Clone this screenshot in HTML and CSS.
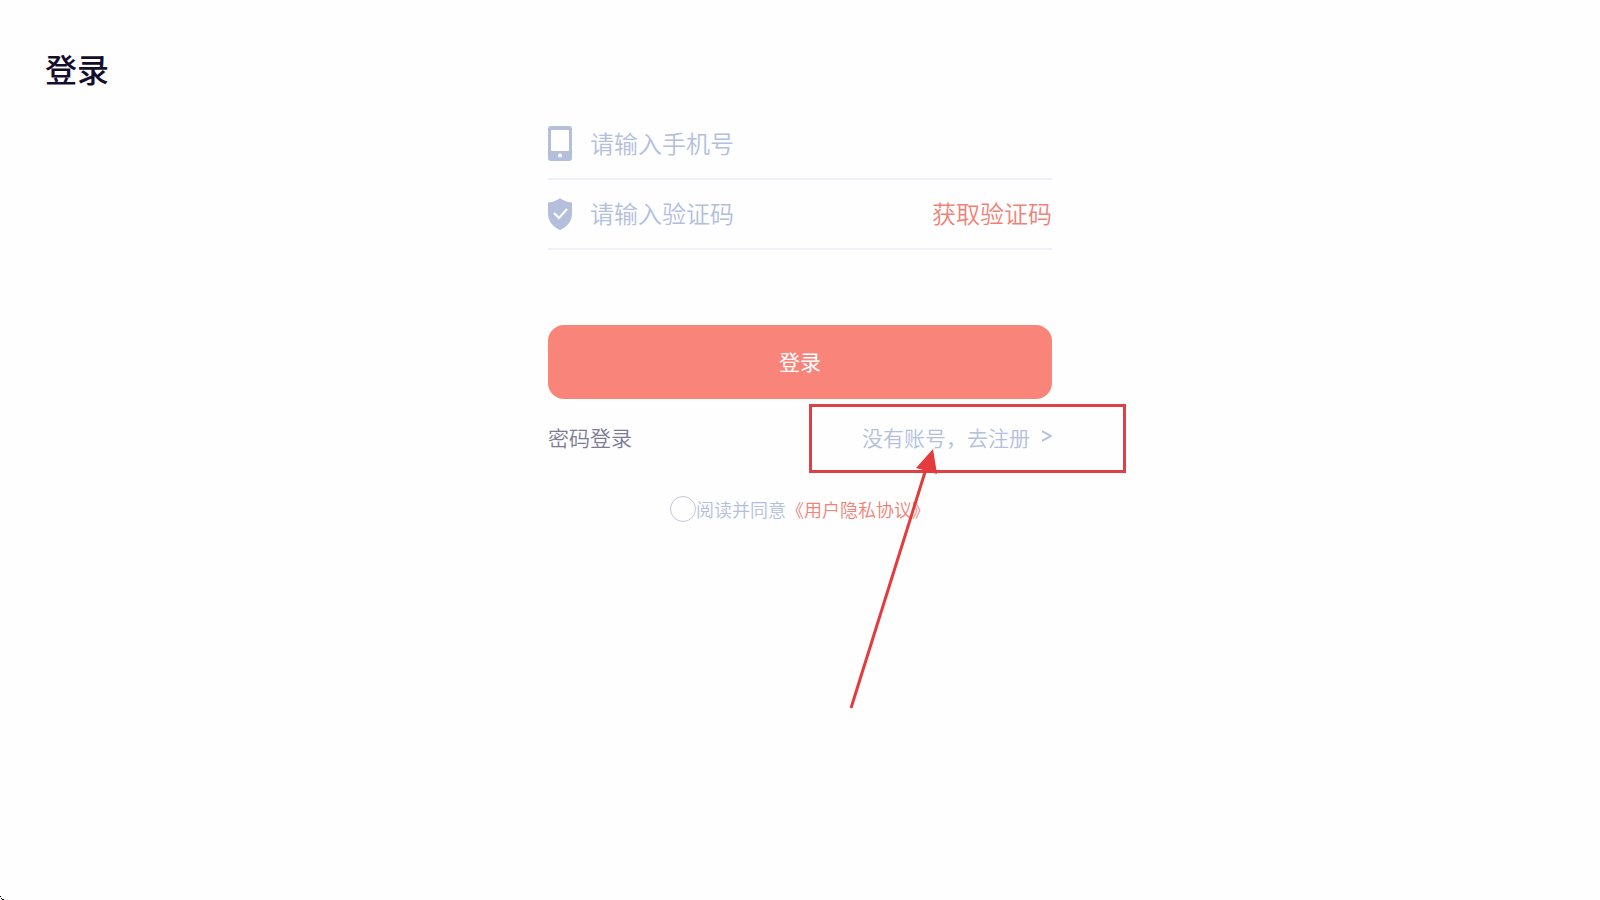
FILE: index.html
```html
<!DOCTYPE html>
<html lang="zh-CN">
<head>
    <meta charset="UTF-8">
    <meta name="viewport" content="width=device-width, initial-scale=1.0">
    <title>登录</title>
    <link rel="stylesheet" href="styles.css">
</head>
<body>
    <h1>登录</h1>

    <form class="login-form">
        <div class="form-group">
            <label for="phone" aria-label="手机号">
                <svg class="icon" width="24" height="36" viewBox="0 0 24 36">
                    <path fill="#b4bfdc" fill-rule="evenodd" d="M3 0h18a3 3 0 0 1 3 3v29a3 3 0 0 1-3 3H3a3 3 0 0 1-3-3V3a3 3 0 0 1 3-3zM4 4a1 1 0 0 0-1 1v19a1 1 0 0 0 1 1h16a1 1 0 0 0 1-1V5a1 1 0 0 0-1-1zM12 27.500a2 2 0 1 0 0 4a2 2 0 1 0 0-4z"/>
                </svg>
            </label>
            <input type="tel" id="phone" name="phone" placeholder="请输入手机号">
        </div>

        <div class="form-group">
            <label for="code" aria-label="验证码">
                <svg class="icon" width="24" height="32" viewBox="0 0 24 32">
                    <path fill="#b4bfdc" d="M12 0C15 2.500 19 4 24 4.500V16C24 24 18 29.500 12 32C6 29.500 0 24 0 16V4.500C5 4 9 2.500 12 0z"/>
                    <path fill="none" stroke="#fff" stroke-width="2" d="M6 15l5 5l8-9"/>
                </svg>
            </label>
            <input type="text" id="code" name="code" placeholder="请输入验证码">
            <button type="button" class="code-btn">获取验证码</button>
        </div>

        <button type="submit" class="login-btn">登录</button>

        <div class="links">
            <a href="#" class="password-link">密码登录</a>
            <a href="#" class="register-link">
                没有账号，去注册
                <svg width="10" height="14" viewBox="0 0 10 14">
                    <path fill="none" stroke="#b4bfdc" stroke-width="2" d="M0 1l9 5l-9 5"/>
                </svg>
            </a>
            <!-- highlights the register link -->
            <div class="mark-box"></div>
            <svg class="mark-arrow" width="92" height="262" viewBox="0 0 92 262">
                <path fill="none" stroke="#e33b3e" stroke-width="3" d="M4 259L79 20"/>
                <path fill="#e33b3e" d="M86 0L90 25L69 19z"/>
            </svg>
        </div>

        <div class="agreement">
            <input type="checkbox" id="agree" name="agree">
            <label for="agree">阅读并同意</label>
            <a href="#">《用户隐私协议》</a>
        </div>
    </form>

    <svg class="corner" width="8" height="4" viewBox="0 0 8 4">
        <path fill="#000" d="M0 0h1v1h-1zM1 2h1v1h-1zM2 3h2v1h-2z"/>
    </svg>
</body>
</html>
```

FILE: styles.css
```css
* {
    box-sizing: border-box;
}

body {
    font-family: "Noto Sans CJK SC", sans-serif;
    font-weight: 350;
    margin: 0;
    min-height: 100vh;
    background-color: #fefefe;
    color: #b4bfdc;
}

h1 {
    margin: 0;
    padding: 44px 45px 2px;
    font-size: 32px;
    line-height: 48px;
    font-weight: 500;
    color: #140e2c;
}

a {
    text-decoration: none;
}

input,
button {
    font-family: inherit;
    font-weight: inherit;
    border: none;
    background: none;
    padding: 0;
}

button {
    cursor: pointer;
}

.login-form {
    max-width: 504px;
    margin: 16px auto 0;
}

.form-group {
    display: flex;
    align-items: center;
    height: 70px;
    border-bottom: 2px solid #f0f1f8;
}

.icon {
    display: block;
    margin-right: 18px;
}

.form-group input {
    flex: 1;
    min-width: 0;
    height: 40px;
    padding-bottom: 4px;
    font-size: 24px;
    color: #140e2c;
    outline: none;
}

.form-group input::placeholder {
    color: #b4bfdc;
    opacity: 1;
}

.code-btn {
    padding-bottom: 2px;
    font-size: 24px;
    line-height: 36px;
    color: #f08277;
}

.login-btn {
    display: block;
    width: 100%;
    height: 74px;
    margin-top: 75px;
    padding-bottom: 2px;
    border-radius: 16px;
    background-color: #f98479;
    color: #fff;
    font-size: 21px;
    font-weight: 400;
}

.links {
    position: relative;
    display: flex;
    justify-content: space-between;
    margin-top: 22px;
    font-size: 21px;
    line-height: 32px;
}

.password-link {
    color: #7c7b94;
}

.register-link {
    display: flex;
    align-items: center;
    gap: 12px;
    color: #b4bfdc;
}

.mark-box {
    position: absolute;
    top: -17px;
    right: -74px;
    width: 317px;
    height: 69px;
    border: 3px solid #dd4145;
    pointer-events: none;
}

.mark-arrow {
    position: absolute;
    top: 28px;
    right: 113px;
    pointer-events: none;
}

.agreement {
    display: flex;
    justify-content: center;
    align-items: center;
    margin-top: 42px;
    font-size: 18px;
    line-height: 28px;
}

.agreement input {
    appearance: none;
    width: 26px;
    height: 26px;
    margin: 0;
    border: 1px solid #c3c8d6;
    border-radius: 50%;
}

.agreement input:checked {
    background-color: #f98479;
}

.agreement a {
    color: #f08277;
}

.corner {
    position: fixed;
    left: 0;
    bottom: 0;
}
```
